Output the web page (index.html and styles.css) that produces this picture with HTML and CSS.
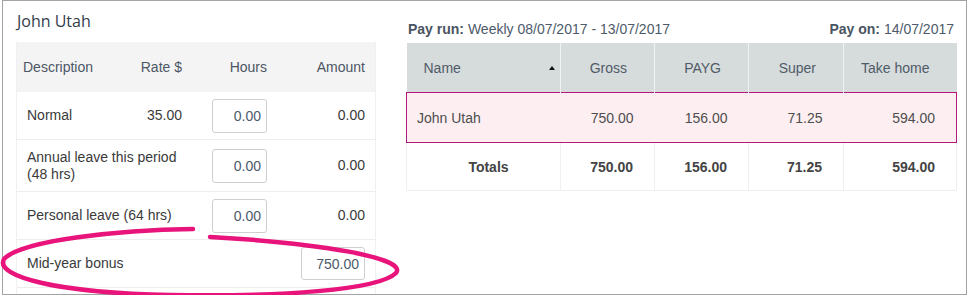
FILE: index.html
```html
<!DOCTYPE html>
<html lang="en">
<head>
	<meta charset="utf-8">
	<link rel="stylesheet" href="styles.css">
</head>
<body>

	<div class="frame">

		<div class="left">
			<h1 class="emp">John Utah</h1>

			<div class="lines">
				<div class="line head">
					<div class="c desc">Description</div>
					<div class="c num">Rate $</div>
					<div class="c num">Hours</div>
					<div class="c num">Amount</div>
				</div>
				<div class="line">
					<div class="c desc">Normal</div>
					<div class="c num">35.00</div>
					<div class="c num"><input class="hrs" type="text" value="0.00"></div>
					<div class="c num">0.00</div>
				</div>
				<div class="line tall">
					<div class="c desc span2">Annual leave this period (48 hrs)</div>
					<div class="c num"><input class="hrs" type="text" value="0.00"></div>
					<div class="c num">0.00</div>
				</div>
				<div class="line">
					<div class="c desc span2">Personal leave (64 hrs)</div>
					<div class="c num"><input class="hrs" type="text" value="0.00"></div>
					<div class="c num">0.00</div>
				</div>
				<div class="line">
					<div class="c desc span3">Mid-year bonus</div>
					<div class="c num"><input class="amt" type="text" value="750.00"></div>
				</div>
				<div class="line">
					<div class="c desc span3">&nbsp;</div>
					<div class="c num"></div>
				</div>
			</div>
		</div>

		<div class="right">
			<div class="info">
				<span><b>Pay run:</b> Weekly 08/07/2017 - 13/07/2017</span>
				<span><b>Pay on:</b> 14/07/2017</span>
			</div>

			<table class="run">
				<colgroup>
					<col style="width:154px">
					<col style="width:94px">
					<col style="width:94px">
					<col style="width:95px">
					<col style="width:113px">
				</colgroup>
				<thead>
					<tr>
						<th class="name"><span class="sort"></span>Name</th>
						<th>Gross</th>
						<th>PAYG</th>
						<th>Super</th>
						<th>Take home</th>
					</tr>
				</thead>
				<tbody>
					<tr class="sel">
						<td class="name">John Utah</td>
						<td>750.00</td>
						<td>156.00</td>
						<td>71.25</td>
						<td>594.00</td>
					</tr>
					<tr class="tot">
						<td class="name">Totals</td>
						<td>750.00</td>
						<td>156.00</td>
						<td>71.25</td>
						<td>594.00</td>
					</tr>
				</tbody>
			</table>
		</div>

	</div>

	<!-- hand drawn highlight round the bonus line -->
	<svg class="mark" width="968" height="299" viewBox="0 0 968 299">
		<path d="M193,229 C120,230 22,240 4,259 C-6,277 60,293 170,295 C280,297 379,290 396,273 C408,258 320,243 210,237"
			fill="none" stroke="#e8137b" stroke-width="4.5" stroke-linecap="round"/>
	</svg>

</body>
</html>
```

FILE: styles.css
```css
body { margin:0; font-family:"Liberation Sans", Arial, sans-serif; font-size:14px; color:#3a3a3a; position:relative; }

.frame { margin-left:2px; width:965px; height:295px; box-sizing:border-box; border:1px solid #a3a3a3; overflow:hidden; display:flex; gap:30px; padding:0 10px 0 13px; }

/* left: employee pay lines */
.left { width:360px; padding-top:10px; }
.emp { margin:0 0 11px 1px; font-family:"Open Sans", sans-serif; font-weight:normal; font-size:16px; line-height:20px; color:#333d4b; }

.lines { border-left:1px solid #f0f0f0; border-right:1px solid #f0f0f0; }
.line { display:grid; grid-template-columns:103px 72px 85px 98px; align-items:center; height:48px; box-sizing:border-box; border-bottom:1px solid #eeeeee; }
.line.head { height:50px; background:#f4f4f4; border-bottom:none; color:#4c5664; }
.line.tall { height:52px; }
.c { padding:0 10px; line-height:17px; }
.c.desc { padding-left:10px; }
.head .c.desc { padding-left:6px; }
.c.num { text-align:right; }
.span2 { grid-column:span 2; }
.span3 { grid-column:span 3; }

input { font-family:"Liberation Sans", Arial, sans-serif; font-size:14px; color:#4d5a6a; text-align:right; border:1px solid #cfcfcf; border-radius:3px; padding:0 5px 0 0; box-sizing:border-box; vertical-align:middle; }
input.hrs { width:55px; height:34px; }
input.amt { width:64px; height:33px; }

/* right: pay run summary */
.right { width:551px; padding-top:18px; }
.info { display:flex; justify-content:space-between; line-height:20px; margin:0 3px 4px 2px; color:#4d5a6a; }
.info b { color:#4a5462; }

.run { border-collapse:collapse; table-layout:fixed; width:550px; }
.run th { height:49px; padding:0 27px 0 0; background:#d6dcdc; color:#505b68; font-weight:normal; text-align:right; border-left:1px solid #f2f2f2; }
.run th:first-child { border-left:none; }
.run th.name { text-align:left; padding:0 5px 0 17px; }
.sort { float:right; margin-top:6px; width:0; height:0; border-left:3px solid transparent; border-right:3px solid transparent; border-bottom:4px solid #111; }

.run td { padding:0 21px 0 10px; text-align:right; color:#4e4e4e; }
.run td.name { text-align:left; }
.sel td { height:49px; background:#fdeef2; border-top:1px solid #b0197a; border-bottom:1px solid #b0197a; }
.sel td:first-child { border-left:1px solid #b0197a; }
.sel td:last-child { border-right:1px solid #b0197a; }
.tot td { height:47px; font-weight:bold; color:#444; border:1px solid #efefef; border-top:none; }
.tot td.name { text-align:center; padding:0 0 0 10px; }

.mark { position:absolute; left:0; top:0; pointer-events:none; }
```
